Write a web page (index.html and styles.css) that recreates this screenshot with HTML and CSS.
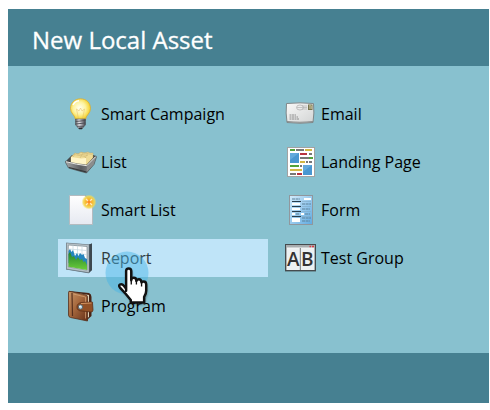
FILE: index.html
```html
<!DOCTYPE html>
<html lang="en">
<head>
<meta charset="utf-8">
<title>New Local Asset</title>
<link rel="stylesheet" href="styles.css">
</head>
<body>
<main class="dialog">
  <header class="dialog-header"><h1>New Local Asset</h1></header>
  <div class="assets">
    <div class="column">
      <button class="asset" type="button">
        <svg class="icon" viewBox="0 0 32 32" aria-hidden="true">
          <defs><radialGradient id="bulb" cx=".45" cy=".45" r=".6"><stop offset="0" stop-color="#fffff0"/><stop offset=".5" stop-color="#fdf3a0"/><stop offset=".85" stop-color="#f6d53b"/><stop offset="1" stop-color="#e0b02c"/></radialGradient>
          <linearGradient id="screw"><stop offset="0" stop-color="#555"/><stop offset=".35" stop-color="#e8e8ee"/><stop offset="1" stop-color="#3c3c44"/></linearGradient></defs>
          <path d="M15.500 .8C9.500 .8 5.500 5 5.500 10.500C5.500 15.500 10 17 10.500 21.500H20.500C21 17 25.500 15.500 25.500 10.500C25.500 5 21.500 .8 15.500 .8Z" fill="url(#bulb)" stroke="#d9ae32" stroke-width=".8"/>
          <path d="M13.500 21L11.500 11L14 13L15.500 10L17 13L19.500 11L17.500 21" fill="none" stroke="#e5ba62" stroke-width=".7" opacity=".7"/>
          <path d="M8 7Q10 3 14 2.700" fill="none" stroke="#fff" stroke-width="1.500"/>
          <path d="M10.500 21H20.500V27Q18.500 28.500 17.500 30.500H13.500Q12.500 28.500 10.500 27Z" fill="url(#screw)" stroke="#555a62" stroke-width=".6"/>
          <path d="M10.500 23.500L20.500 22.500M10.500 26L20.500 25M12 28.300H19" stroke="#4c4c54" stroke-width=".9"/>
          <path d="M13.500 29.500H17.500L17 31.200H14Z" fill="#292b30"/>
        </svg>
        <span>Smart Campaign</span>
      </button>
      <button class="asset" type="button">
        <svg class="icon" viewBox="0 0 32 32" aria-hidden="true">
          <defs><linearGradient id="tray"><stop offset="0" stop-color="#a7a9aa"/><stop offset=".5" stop-color="#5b5d60"/><stop offset="1" stop-color="#929495"/></linearGradient></defs>
          <path d="M1 15L7 9H29L31 11L22 21L1 17Z" fill="#45494b"/>
          <path d="M6 11L10 7L13 8L16 6L19 7L23 6L25 7L28 7V15L21 20L6 17Z" fill="#eedb96" stroke="#bca567" stroke-width=".5"/>
          <path d="M6 11L16 12.500L21 12V20L6 17Z" fill="#fff5c7"/>
          <path d="M9 8.500L20 10.500L21 12M12 7.700L23 9.500M16 6.500L27 8.500M10 8L8 11M18 7L15 12M23 7L20 12" fill="none" stroke="#cfb875" stroke-width=".6"/>
          <path d="M.5 15.200Q0 16 .8 17L3.500 22Q12 24.500 21.500 27L29 18.500L31.500 11Q31.500 9.500 30 10L21.500 19Q11 18 .5 15.200Z" fill="url(#tray)" stroke="#333" stroke-width=".5"/>
          <path d="M1 15.700Q12 18.700 21.800 19.700L30.700 10.700" fill="none" stroke="#e7e7e3" stroke-width="1"/>
          <path d="M22 20.500L21.500 26.300L28.500 18.500L30.500 12Z" fill="#8b8d8d"/>
          <path d="M4 21.500L21.500 26" stroke="#333638" stroke-width="1.200"/>
        </svg>
        <span>List</span>
      </button>
      <button class="asset" type="button">
        <svg class="icon" viewBox="0 0 32 32" aria-hidden="true">
          <defs><linearGradient id="paper" x2="0" y2="1"><stop offset="0" stop-color="#fff"/><stop offset="1" stop-color="#e6e9f1"/></linearGradient>
          <radialGradient id="glow"><stop offset="0" stop-color="#ff982b"/><stop offset=".45" stop-color="#f8bb31"/><stop offset=".75" stop-color="#f4d64b" stop-opacity=".85"/><stop offset="1" stop-color="#f4df63" stop-opacity="0"/></radialGradient></defs>
          <path d="M4.500 1.500H20L27.500 9V30.500H4.500Z" fill="url(#paper)" stroke="#b4bbc0"/>
          <path d="M20 1.500L28 9" stroke="#919ba0" stroke-width=".8"/>
          <circle cx="24" cy="8" r="7.500" fill="url(#glow)"/>
          <path d="M21 5L27 11M27 5L21 11" stroke="#ffedc2" stroke-width="1.300"/><circle cx="24" cy="8" r="1.700" fill="#ff8b24"/>
        </svg>
        <span>Smart List</span>
      </button>
      <button class="asset asset-active" type="button">
        <svg class="icon" viewBox="0 0 32 32" aria-hidden="true">
          <defs><linearGradient id="green" x2="0" y2="1"><stop offset="0" stop-color="#248029"/><stop offset="1" stop-color="#6bcd3b"/></linearGradient></defs>
          <path d="M1 .8L24 2.500L27 1.500V28L23.500 31.200L1 27.500Z" fill="#596671"/>
          <path d="M24 2.500L27 1.500V28L23.500 31.200Z" fill="#3d4850"/>
          <path d="M1.500 1L24 2.800V30.500L1.500 27Z" fill="#bac4ca" stroke="#798991" stroke-width=".5"/>
          <path d="M3.300 3L22 4.500V28.200L3.300 25Z" fill="#fff" stroke="#687982" stroke-width=".6"/>
          <path d="M3.500 7L22 8.500M3.500 11L22 12.500M8 3.500V15M12.500 3.800V15M17 4V18" stroke="#c3d7df" stroke-width=".7"/>
          <path d="M3.500 9L5 7L6.500 10L8 8L10 14L12 11L13.500 14L15 11L17 13L18.500 12L20 16L22 17V24L3.500 21Z" fill="#2585bd"/>
          <path d="M3.500 12L5 10L7 15L9 14L11 18L13 15L15 18L17 17L18.500 20L20 19L22 23V28L3.500 24.800Z" fill="url(#green)"/>
        </svg>
        <span>Report</span>
        <svg class="pointer" viewBox="0 0 48 60" aria-hidden="true">
          <circle cx="22" cy="22" r="21.500" fill="#45b5e6" opacity=".46"/>
          <g transform="translate(0 -.5) scale(1.030)">
            <path class="hand-shadow" d="M20.500 39V20Q20.500 17.500 23 17.500T25.500 20V29Q25.500 26.500 28 26.500T30.500 29.500Q31 28 33 28T35.500 31Q36 30 37.500 30Q40 30 40 33V39Q40 42 38 45V50.500H25V48L20 42L14.500 36Q13 34 14.500 33Q16.500 32 18.500 34.500L20.500 37Z"/>
            <path class="hand" d="M20.500 39V20Q20.500 17.500 23 17.500T25.500 20V29Q25.500 26.500 28 26.500T30.500 29.500Q31 28 33 28T35.500 31Q36 30 37.500 30Q40 30 40 33V39Q40 42 38 45V50.500H25V48L20 42L14.500 36Q13 34 14.500 33Q16.500 32 18.500 34.500L20.500 37Z"/>
            <path d="M25.500 28V33M30.500 29V33M35.500 31V35" stroke="#111" stroke-width="1.300"/>
          </g>
        </svg>
      </button>
      <button class="asset" type="button">
        <svg class="icon" viewBox="0 0 32 32" aria-hidden="true">
          <defs><linearGradient id="leather" x2="1" y2="1"><stop offset="0" stop-color="#c79668"/><stop offset=".45" stop-color="#a6683d"/><stop offset="1" stop-color="#663019"/></linearGradient></defs>
          <path d="M4 1L24 3Q26.500 4 26.500 7V26L22 30L6 27Z" fill="#482315"/>
          <path d="M6 2L24 5V27L20 29L6 26Z" fill="#dfd0b6"/>
          <path d="M4 1.200L21 5Q22.500 5.500 22.500 7V31L5.500 27.500Q3.500 27 3.500 25V3Q3.500 2 4 1.200Z" fill="url(#leather)" stroke="#55301d" stroke-width=".8"/>
          <path d="M7 3L7.500 26" stroke="#57301e" stroke-width="1.200"/><path d="M8.500 4L20.500 7V28.500" fill="none" stroke="#d6a578" stroke-width=".7"/>
          <path d="M27.500 13Q28 12 27 12L17 12.500Q12 13 12 17T17 21L26 22Q28 22 28 20Z" fill="#915026" stroke="#5e2e17" stroke-width=".8"/>
          <path d="M16 13.500L26.500 13" stroke="#d39562" stroke-width="1"/><circle cx="15.500" cy="17" r="2.200" fill="#bad5e0" stroke="#4c5c65" stroke-width=".8"/><circle cx="15" cy="16.500" r=".8" fill="#fff"/>
        </svg>
        <span>Program</span>
      </button>
    </div>
    <div class="column">
      <button class="asset" type="button">
        <svg class="icon" viewBox="0 0 32 32" aria-hidden="true">
          <defs><linearGradient id="envelope" x2="1" y2="1"><stop offset="0" stop-color="#f9f9f8"/><stop offset="1" stop-color="#d2d4d4"/></linearGradient></defs>
          <path d="M1.500 5.500Q15 4.200 28.500 5.500Q29.500 15 28 24.500Q15 26 2 24.500Q.5 15 1.500 5.500Z" fill="url(#envelope)" stroke="#7f8789"/>
          <path d="M2 23.500Q15 25 28 23.500" fill="none" stroke="#898c8c" stroke-width="1.200"/>
          <rect x="23.500" y="7" width="3.500" height="4.500" fill="#e7e2bb" stroke="#76744d"/><path d="M25 8V11" stroke="#655d38"/>
          <ellipse cx="15" cy="9.500" rx="3.500" ry="2.500" fill="none" stroke="#aaa" stroke-width=".7"/><path d="M12 9.500H22M17 8H22M17 11H22" stroke="#b1b1b1" stroke-width=".7"/>
          <path d="M4.500 17H11M4.500 19H13M4.500 21H14" stroke="#777" stroke-width=".8" stroke-dasharray="2 .5"/>
        </svg>
        <span>Email</span>
      </button>
      <button class="asset" type="button">
        <svg class="icon" viewBox="0 0 32 32" aria-hidden="true">
          <rect x="2.500" y="1.500" width="27" height="29" fill="#fff" stroke="#a2a2a2"/>
          <path fill="#52a33a" d="M5 3h5v2H5zM24 11h4v2h-4zM5 19h9v2H5z"/>
          <path fill="#777" d="M11 3h8v2h-8zM24 7h3v2h-3zM15 11h9v2h-9zM21 15h2v2h-2zM24 15h3v2h-3zM15 19h2v2h-2zM5 27h6v2H5z"/>
          <path fill="#d2b744" d="M20 3h7v2h-7zM15 15h5v2h-5zM5 23h12v2H5z"/>
          <path fill="#b83340" d="M15 7h7v2h-7zM12 27h5v2h-5z"/>
          <path fill="#4997d1" d="M5 7h9v10H5zM18 19h9v10h-9z"/><path fill="#62a9dc" d="M5 7h9L5 14zM18 19h9l-9 7z"/>
        </svg>
        <span>Landing Page</span>
      </button>
      <button class="asset" type="button">
        <svg class="icon" viewBox="0 0 32 32" aria-hidden="true">
          <defs><linearGradient id="form" x2="1" y2="1"><stop offset="0" stop-color="#d4ebfb"/><stop offset="1" stop-color="#5faae1"/></linearGradient></defs>
          <rect x="4.500" y="1.500" width="23" height="29" fill="url(#form)" stroke="#90979d"/>
          <path fill="#fff" d="M19 4h7v2h-7zM7 9h8v2H7zM7 14h8v2H7zM7 19h3v2H7zM16 19h3v2h-3zM7 24h8v4H7z"/>
          <path stroke="#5c8199" stroke-width="1" d="M7 5H15M17 10H26M17 15H25M11 20H14M20 20H25M17 24H26M17 27H25" stroke-dasharray="3 .6"/>
          <path stroke="#293d4c" stroke-width="1" d="M7 7.500H16M7 12.500H16M7 17.500H16M7 22.500H16"/><path stroke="#7fa9c6" stroke-width=".6" d="M17 7.500H26M17 12.500H26M17 17.500H26M17 22.500H26"/>
        </svg>
        <span>Form</span>
      </button>
      <button class="asset" type="button">
        <svg class="icon" viewBox="0 0 32 32" aria-hidden="true">
          <rect x=".7" y="2.700" width="29.600" height="26" fill="#f5f7f7" stroke="#454b4e" stroke-width="1.400"/>
          <path d="M1 3H30V5.500H1Z" fill="#a8adaf"/><path d="M24.500 4.500H26M27 4.500H29" stroke="#db3945" stroke-width="1.500"/>
          <path d="M2 6.500H14.500V28H2ZM16 6.500H29V28H16Z" fill="#edf1f2"/><path d="M15.300 6V28" stroke="#707678"/>
          <text class="test-letter" x="8.300" y="24">A</text><text class="test-letter" x="22.300" y="24">B</text>
        </svg>
        <span>Test Group</span>
      </button>
    </div>
  </div>
  <footer class="dialog-footer"></footer>
</main>
</body>
</html>
```
FILE: styles.css
```css
* { box-sizing: border-box; }
body {
  margin: 0;
  padding: 9px 1px 7px 8px;
  background: #fff;
  color: #000;
  font-family: "Open Sans", "Noto Sans", sans-serif;
}
.dialog { background: #88c1cf; }
.dialog-header {
  padding: 14px 24px 10px;
  background: #468091;
  color: #fff;
}
.dialog-header h1 {
  margin: 0;
  font-size: 24px;
  line-height: 33px;
  font-weight: 400;
  -webkit-text-stroke: .3px #fff;
}
.assets {
  display: flex;
  gap: 10px;
  padding: 29px 0 28px 50px;
}
.column {
  display: flex;
  flex: 0 1 210px;
  flex-direction: column;
  gap: 10px;
}
.asset {
  position: relative;
  display: flex;
  align-items: center;
  gap: 4px;
  width: 100%;
  height: 38px;
  margin: 0;
  padding: 0 7px;
  border: 0;
  background: transparent;
  color: inherit;
  font: inherit;
  font-size: 16px;
  line-height: 24px;
  text-align: left;
  white-space: nowrap;
  cursor: pointer;
}
.asset-active {
  z-index: 1;
  background: #bfe4f8;
  color: #303b40;
}
.icon {
  flex: none;
  width: 32px;
  height: 32px;
}
.pointer {
  position: absolute;
  top: 12px;
  left: 47px;
  width: 48px;
  height: 60px;
  pointer-events: none;
}
.hand {
  fill: #fff;
  stroke: #111;
  stroke-width: 2.4;
  stroke-linejoin: round;
}
.hand-shadow {
  fill: #000;
  opacity: .4;
  transform: translate(1px, 2px);
  filter: blur(1px);
}
.test-letter {
  fill: #333;
  font-size: 19px;
  font-weight: 600;
  text-anchor: middle;
}
.dialog-footer {
  height: 50px;
  background: #468091;
}
```
